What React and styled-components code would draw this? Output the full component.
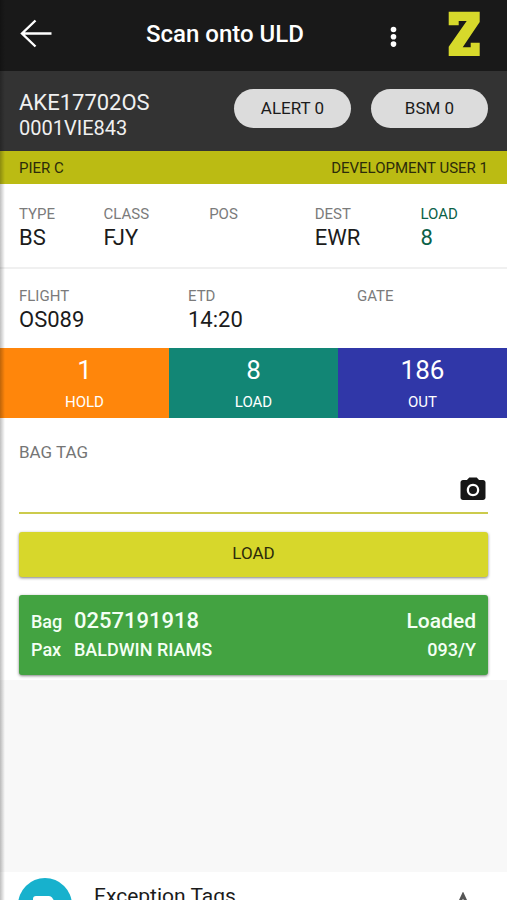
import * as React from "react";
import styled, { createGlobalStyle } from "styled-components";

const GlobalStyle = createGlobalStyle`
  * {
    box-sizing: border-box;
  }
  body {
    margin: 0;
    background-color: #f8f8f8;
    color: #1b1b1b;
    font-family: Roboto, "Liberation Sans", sans-serif;
  }
  button,
  input {
    font-family: inherit;
    color: inherit;
  }
`;

const Page = styled.div`
  position: relative;
  display: flex;
  flex-direction: column;
  height: 100vh;
  overflow: hidden;

  &::before {
    content: "";
    position: absolute;
    z-index: 1;
    top: 0;
    bottom: 0;
    left: 0;
    width: 5px;
    background: linear-gradient(to right, rgba(0, 0, 0, 0.25), transparent);
    pointer-events: none;
  }
`;

const AppBar = styled.header`
  display: flex;
  align-items: center;
  height: 71px;
  padding: 0 26px 4px 20px;
  background-color: #191919;
  color: #ffffff;
`;
const IconButton = styled.button`
  display: flex;
  padding: 0;
  border: none;
  background: none;
  cursor: pointer;
`;
const Title = styled.h1`
  flex: 1;
  margin: 0;
  padding-left: 10px;
  font-size: 24px;
  font-weight: 500;
  line-height: 28px;
  text-align: center;
`;
const Logo = styled.svg`
  margin-left: 50px;
`;

const UldBar = styled.section`
  display: flex;
  align-items: center;
  gap: 20px;
  height: 80px;
  padding: 0 19px;
  background-color: #333333;
  color: #f0f0f0;
`;
const UldName = styled.div`
  flex: 1;
  padding-top: 8px;
  font-size: 22px;
  line-height: 26px;
`;
const UldCode = styled.div`
  font-size: 20px;
  line-height: 24px;
`;
const Pill = styled.button`
  width: 117px;
  height: 39px;
  margin-bottom: 6px;
  padding: 0;
  border: none;
  border-radius: 20px;
  background-color: #dcdcdc;
  color: #1b1b1b;
  font-size: 17px;
  cursor: pointer;
`;

const LocationBar = styled.div`
  display: flex;
  align-items: center;
  justify-content: space-between;
  height: 33px;
  padding: 0 19px;
  background-color: #bbbb13;
  color: #2c2b0a;
  font-size: 15px;
`;

const Panel = styled.main`
  background-color: #ffffff;
`;
const InfoRow = styled.dl`
  display: grid;
  grid-template-columns: ${(props) => props.$columns};
  margin: 0;
  padding: ${(props) => (props.$divided ? "20px 0 15px" : "17px 0 14px")};
  border-bottom: ${(props) => (props.$divided ? "2px solid #f0f0f0" : "none")};
`;
const InfoCell = styled.div`
  padding-left: 19px;
  color: ${(props) => (props.$accent ? "#0b6148" : "#1b1b1b")};
`;
const InfoLabel = styled.dt`
  color: ${(props) => (props.$accent ? "#0b6148" : "#7b7b7b")};
  font-size: 15px;
  line-height: 20px;
`;
const InfoValue = styled.dd`
  min-height: 28px;
  margin: 0;
  font-size: 22px;
  line-height: 28px;
`;

const Counters = styled.div`
  display: grid;
  grid-template-columns: repeat(3, 1fr);
`;
const Counter = styled.button`
  height: 70px;
  padding: 0;
  border: none;
  background-color: ${(props) => props.$color};
  color: #ffffff;
  font-size: 15px;
  line-height: 20px;
  cursor: pointer;
`;
const CounterNumber = styled.span`
  display: block;
  margin-bottom: 6px;
  font-size: 26px;
  line-height: 32px;
`;

const Form = styled.form`
  padding: 24px 19px 5px;
`;
const FieldLabel = styled.label`
  display: block;
  color: #757575;
  font-size: 17px;
  line-height: 20px;
`;
const Field = styled.div`
  display: flex;
  align-items: center;
  height: 52px;
  margin-bottom: 18px;
  padding-top: 5px;
  border-bottom: 2px solid #cccb4c;
`;
const FieldInput = styled.input`
  flex: 1;
  min-width: 0;
  padding: 0;
  border: none;
  outline: none;
  background: none;
  font-size: 20px;
`;
const LoadButton = styled.button`
  display: block;
  width: 100%;
  height: 45px;
  margin-bottom: 18px;
  padding: 0 0 3px;
  border: none;
  border-radius: 3px;
  background-color: #d7d72b;
  box-shadow: 0 1px 3px rgba(0, 0, 0, 0.5);
  color: #2c2b0a;
  font-size: 17px;
  cursor: pointer;
`;

const BagCard = styled.section`
  height: 80px;
  padding: 12px;
  border-radius: 3px;
  background-color: #43a341;
  box-shadow: 0 1px 3px rgba(0, 0, 0, 0.5);
  color: #f4fff4;
  font-size: 18px;
  font-weight: 500;
  line-height: 28px;
`;
const BagLine = styled.div`
  display: flex;
  align-items: baseline;
`;
const BagLabel = styled.span`
  width: 43px;
`;
const BagValue = styled.span`
  flex: 1;
  font-size: ${(props) => (props.$large ? "22px" : "18px")};
`;
const BagStatus = styled.span`
  font-size: ${(props) => (props.$large ? "21px" : "18px")};
`;

const ExceptionSheet = styled.footer`
  display: flex;
  align-items: flex-start;
  flex: 0 0 28px;
  margin-top: auto;
  padding: 6px 33px 0 18px;
  overflow: hidden;
  background-color: #ffffff;
`;
const TagBadge = styled.span`
  display: flex;
  flex: none;
  align-items: center;
  justify-content: center;
  width: 54px;
  height: 54px;
  border-radius: 50%;
  background-color: #17b1cd;
`;
const SheetTitle = styled.span`
  flex: 1;
  padding: 4px 0 0 22px;
  font-size: 21px;
  line-height: 28px;
`;
const SheetArrow = styled.svg`
  flex: none;
  margin-top: 14px;
`;

const uldInfo = [
  { label: "TYPE", value: "BS" },
  { label: "CLASS", value: "FJY" },
  { label: "POS", value: "" },
  { label: "DEST", value: "EWR" },
  { label: "LOAD", value: "8", accent: true }
];

const flightInfo = [
  { label: "FLIGHT", value: "OS089" },
  { label: "ETD", value: "14:20" },
  { label: "GATE", value: "" }
];

const counters = [
  { label: "HOLD", count: 1, color: "#ff860b" },
  { label: "LOAD", count: 8, color: "#128675" },
  { label: "OUT", count: 186, color: "#3037a8" }
];

function Info({ items, columns, divided }) {
  return (
    <InfoRow $columns={columns} $divided={divided}>
      {items.map((item) => (
        <InfoCell key={item.label} $accent={item.accent}>
          <InfoLabel $accent={item.accent}>{item.label}</InfoLabel>
          <InfoValue>{item.value}</InfoValue>
        </InfoCell>
      ))}
    </InfoRow>
  );
}

function Header() {
  return (
    <AppBar>
      <IconButton aria-label="Back">
        <svg width="32" height="30" viewBox="0 0 32 30" fill="none">
          <path
            d="M31.5 14.5H2M15.5 1.5L2 14.5L15.5 27.5"
            stroke="#ffffff"
            strokeWidth="2.4"
          />
        </svg>
      </IconButton>
      <Title>Scan onto ULD</Title>
      <IconButton aria-label="More">
        <svg width="10" height="26" viewBox="0 0 10 26" fill="#ffffff">
          <circle cx="5.5" cy="8.5" r="2.8" />
          <circle cx="5.5" cy="15.8" r="2.8" />
          <circle cx="5.5" cy="23.1" r="2.8" />
        </svg>
      </IconButton>
      <Logo width="33" height="46" viewBox="0 0 33 46" fill="#d7d92b">
        <path d="M0.7 0.7H31.7V11L14.7 36.3H22.7V31.7H31.7V45H0.7V35.7L18.7 10H10.7V14.3H0.7Z" />
      </Logo>
    </AppBar>
  );
}

export default function App() {
  const [tag, setTag] = React.useState("");

  return (
    <Page>
      <GlobalStyle />
      <Header />
      <UldBar>
        <UldName>
          AKE17702OS
          <UldCode>0001VIE843</UldCode>
        </UldName>
        <Pill>ALERT 0</Pill>
        <Pill>BSM 0</Pill>
      </UldBar>
      <LocationBar>
        <span>PIER C</span>
        <span>DEVELOPMENT USER 1</span>
      </LocationBar>
      <Panel>
        <Info items={uldInfo} columns="4fr 5fr 5fr 5fr 5fr" divided />
        <Info items={flightInfo} columns="repeat(3, 1fr)" />
        <Counters>
          {counters.map((counter) => (
            <Counter key={counter.label} $color={counter.color}>
              <CounterNumber>{counter.count}</CounterNumber>
              {counter.label}
            </Counter>
          ))}
        </Counters>
        <Form onSubmit={(e) => e.preventDefault()}>
          <FieldLabel htmlFor="bagTag">BAG TAG</FieldLabel>
          <Field>
            <FieldInput
              id="bagTag"
              type="text"
              value={tag}
              onChange={(e) => setTag(e.target.value)}
            />
            <IconButton type="button" aria-label="Scan with camera">
              <svg width="30" height="30" viewBox="0 0 24 24" fill="#161616">
                <circle cx="12" cy="12" r="3.2" />
                <path d="M9 2L7.17 4H4c-1.1 0-2 .9-2 2v12c0 1.1.9 2 2 2h16c1.1 0 2-.9 2-2V6c0-1.1-.9-2-2-2h-3.17L15 2H9zm3 15c-2.76 0-5-2.24-5-5s2.24-5 5-5 5 2.24 5 5-2.24 5-5 5z" />
              </svg>
            </IconButton>
          </Field>
          <LoadButton type="submit">LOAD</LoadButton>
          <BagCard>
            <BagLine>
              <BagLabel>Bag</BagLabel>
              <BagValue $large>0257191918</BagValue>
              <BagStatus $large>Loaded</BagStatus>
            </BagLine>
            <BagLine>
              <BagLabel>Pax</BagLabel>
              <BagValue>BALDWIN RIAMS</BagValue>
              <BagStatus>093/Y</BagStatus>
            </BagLine>
          </BagCard>
        </Form>
      </Panel>
      <ExceptionSheet>
        <TagBadge>
          <svg width="24" height="18" viewBox="0 0 24 18" fill="#ffffff">
            <path d="M3 0H16Q18 0 19 1.5L24 9L19 16.5Q18 18 16 18H3Q0 18 0 15V3Q0 0 3 0Z" />
          </svg>
        </TagBadge>
        <SheetTitle>Exception Tags</SheetTitle>
        <SheetArrow width="22" height="24" viewBox="0 0 22 24" fill="none">
          <path d="M4 18L11 3L18 18" stroke="#555555" strokeWidth="3" />
        </SheetArrow>
      </ExceptionSheet>
    </Page>
  );
}
